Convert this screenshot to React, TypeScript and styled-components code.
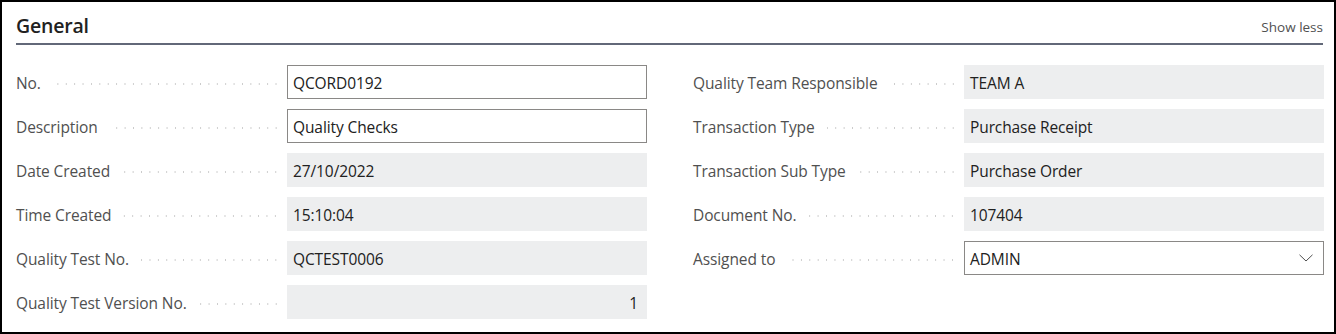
import React from "react";
import styled, { createGlobalStyle } from "styled-components";

const Global = createGlobalStyle`
  html, body { margin: 0; padding: 0; background: #ffffff; }
  body { font-family: "Open Sans", "Noto Sans", sans-serif; }
  * { box-sizing: border-box; }
`;

const Frame = styled.div`
  width: 1336px;
  height: 334px;
  border: 2px solid #000;
  padding: 0 11px 0 14px;
  background: #fff;
`;

const Header = styled.div`
  display: flex;
  align-items: flex-end;
  justify-content: space-between;
  height: 43px;
  border-bottom: 2px solid #626878;
  padding-bottom: 4px;
`;

const Title = styled.h2`
  margin: 0;
  font-size: 19.5px;
  font-weight: 600;
  color: #212121;
  line-height: 26px;
  letter-spacing: -0.2px;
`;

const ShowLess = styled.span`
  font-size: 13.5px;
  color: #505050;
  line-height: 18px;
  padding-bottom: 3px;
`;

const Columns = styled.div`
  display: grid;
  grid-template-columns: 630px 630px;
  column-gap: 47px;
  padding-top: 20px;
`;

const Column = styled.div`
  display: flex;
  flex-direction: column;
  gap: 10px;
`;

const Row = styled.div`
  display: flex;
  align-items: center;
  height: 34px;
`;

const LabelArea = styled.div`
  width: 271px;
  flex: none;
  display: flex;
  align-items: center;
  padding-right: 7px;
  padding-top: 2px;
`;

const Label = styled.span`
  font-size: 15.5px;
  color: #505050;
  white-space: nowrap;
  letter-spacing: -0.1px;
`;

const Dots = styled.span`
  flex: 1;
  height: 2px;
  margin-left: 12px;
  margin-top: 2px;
  background-image: radial-gradient(circle, #cbcbcb 0.75px, transparent 1px);
  background-size: 8.4px 2px;
  background-repeat: repeat-x;
  background-position: right center;
`;

const Field = styled.div<{ $editable?: boolean; $right?: boolean }>`
  width: 360px;
  height: 34px;
  flex: none;
  display: flex;
  align-items: center;
  justify-content: ${(p) => (p.$right ? "flex-end" : "space-between")};
  padding: 2px 8px 0 5px;
  font-size: 15.5px;
  color: #212121;
  letter-spacing: -0.1px;
  background: ${(p) => (p.$editable ? "#ffffff" : "#edeeef")};
  border: 1px solid ${(p) => (p.$editable ? "#8a8886" : "#edeeef")};
`;

const Chevron = styled.svg`
  width: 14px;
  height: 8px;
  margin-right: 2px;
  margin-top: -2px;
`;

type F = { label: string; value: string; editable?: boolean; right?: boolean; select?: boolean };

const left: F[] = [
  { label: "No.", value: "QCORD0192", editable: true },
  { label: "Description", value: "Quality Checks", editable: true },
  { label: "Date Created", value: "27/10/2022" },
  { label: "Time Created", value: "15:10:04" },
  { label: "Quality Test No.", value: "QCTEST0006" },
  { label: "Quality Test Version No.", value: "1", right: true },
];

const right: F[] = [
  { label: "Quality Team Responsible", value: "TEAM A" },
  { label: "Transaction Type", value: "Purchase Receipt" },
  { label: "Transaction Sub Type", value: "Purchase Order" },
  { label: "Document No.", value: "107404" },
  { label: "Assigned to", value: "ADMIN", editable: true, select: true },
];

const FieldRow = ({ f }: { f: F }) => (
  <Row>
    <LabelArea>
      <Label>{f.label}</Label>
      <Dots />
    </LabelArea>
    <Field $editable={f.editable} $right={f.right}>
      <span>{f.value}</span>
      {f.select && (
        <Chevron viewBox="0 0 14 8">
          <path d="M0.5 0.8 L7 7 L13.5 0.8" fill="none" stroke="#505050" strokeWidth="1" />
        </Chevron>
      )}
    </Field>
  </Row>
);

export default function App() {
  return (
    <>
      <Global />
      <Frame>
        <Header>
          <Title>General</Title>
          <ShowLess>Show less</ShowLess>
        </Header>
        <Columns>
          <Column>
            {left.map((f) => (
              <FieldRow key={f.label} f={f} />
            ))}
          </Column>
          <Column>
            {right.map((f) => (
              <FieldRow key={f.label} f={f} />
            ))}
          </Column>
        </Columns>
      </Frame>
    </>
  );
}
